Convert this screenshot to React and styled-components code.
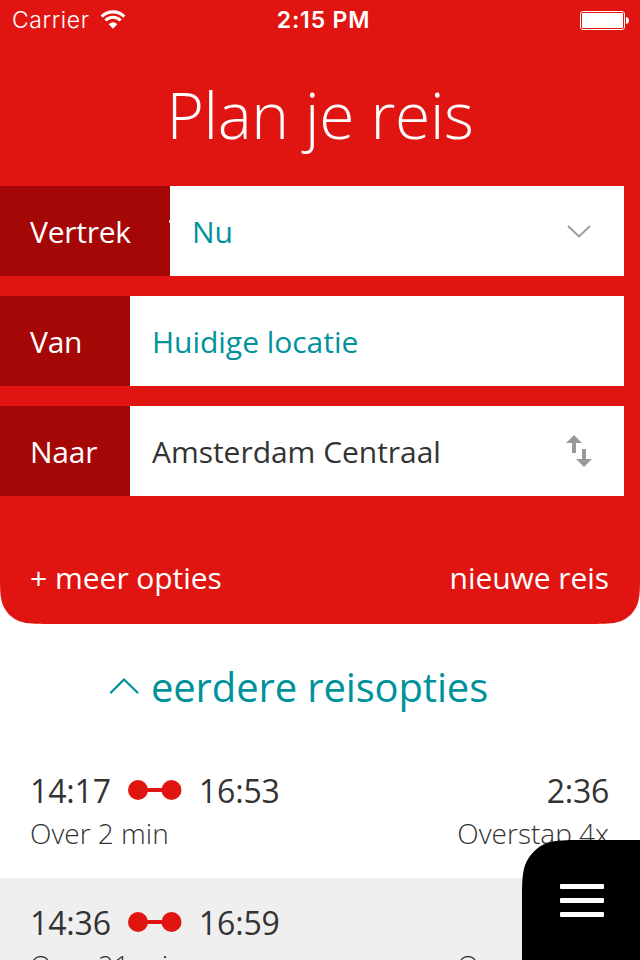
import styled, { createGlobalStyle } from "styled-components";

const GlobalStyle = createGlobalStyle`
  * {
    box-sizing: border-box;
  }

  body {
    margin: 0;
    background: #ffffff;
    color: #333333;
    font-family: "Open Sans", sans-serif;
  }
`;

const Screen = styled.div`
  position: relative;
  width: 640px;
  height: 960px;
  overflow: hidden;
  background: #ffffff;
`;

const Planner = styled.section`
  display: flex;
  flex-direction: column;
  height: 624px;
  background: #e01512;
  color: #ffffff;
  clip-path: path(
    "M0 0H640V575.1C640 589.2 640 596.2 637.6 603.8C634.6 612.1 628.1 618.6 619.8 621.6C612.2 624 605.2 624 591.1 624H48.9C34.8 624 27.8 624 20.2 621.6C11.9 618.6 5.4 612.1 2.4 603.8C0 596.2 0 589.2 0 575.1Z"
  );
`;

const StatusBar = styled.div`
  display: grid;
  grid-template-columns: 1fr auto 1fr;
  align-items: center;
  height: 40px;
  padding: 0 11px 0 12px;
  font-family: Inter, sans-serif;
  font-size: 23px;
  line-height: 40px;
`;

const Carrier = styled.div`
  display: flex;
  align-items: center;
  gap: 10px;
  font-weight: 350;
  letter-spacing: 0.6px;
`;

const Clock = styled.div`
  padding-left: 6px;
  font-weight: 600;
  letter-spacing: 0.8px;
`;

const Battery = styled.svg`
  justify-self: end;
`;

const Title = styled.h1`
  height: 146px;
  margin: 0;
  padding-top: 31px;
  font-size: 64px;
  font-weight: 300;
  letter-spacing: -0.3px;
  line-height: 87px;
  text-align: center;
`;

const Fields = styled.div`
  display: flex;
  flex-direction: column;
  gap: 20px;
  padding-right: 16px;
`;

const Field = styled.div`
  display: flex;
  height: 90px;
  font-size: 30px;
  letter-spacing: -0.03px;
  line-height: 92px;
`;

const Label = styled.div`
  position: relative;
  width: ${(props) => (props.$wide ? 170 : 130)}px;
  padding-left: 30px;
  background: #a50606;
  letter-spacing: -0.25px;
`;

const LabelEdge = styled.span`
  position: absolute;
  top: 34px;
  right: 0;
  width: 1px;
  height: 3px;
  background: #e8c0c0;
`;

const Value = styled.div`
  display: flex;
  flex: 1;
  justify-content: space-between;
  padding: 0 31px 0 22px;
  background: #ffffff;
  color: ${(props) => (props.$dark ? "#333333" : "#00929c")};

  svg {
    align-self: center;
  }
`;

const Actions = styled.div`
  display: flex;
  justify-content: space-between;
  margin-top: 61px;
  padding: 0 31px 0 30px;
  font-size: 30px;
  letter-spacing: -0.06px;
  line-height: 41px;
`;

const More = styled.div`
  display: flex;
  gap: 8px;
`;

const Earlier = styled.div`
  display: flex;
  align-items: center;
  gap: 12px;
  height: 122px;
  padding: 4px 0 0 109px;
  color: #00929c;
  font-size: 40px;
  letter-spacing: -0.15px;
  line-height: 54px;
`;

const EarlierArrow = styled.svg`
  margin-top: -3px;
`;

const Trip = styled.div`
  display: grid;
  grid-template-columns: 1fr auto;
  align-content: start;
  height: 132px;
  padding: 22px 31px 0 30px;
  background: ${(props) => (props.$shaded ? "#efefef" : "#ffffff")};
`;

const Times = styled.div`
  display: flex;
  align-items: center;
  gap: 17px;
  font-size: 32px;
  letter-spacing: -0.15px;
  line-height: 46px;
`;

const Duration = styled.div`
  font-size: 32px;
  letter-spacing: -0.25px;
  line-height: 46px;
  text-align: right;
`;

const Note = styled.div`
  font-size: 28px;
  font-weight: 300;
  line-height: 38px;
`;

const MenuButton = styled.div`
  position: absolute;
  right: 0;
  bottom: 0;
  display: flex;
  flex-direction: column;
  gap: 9px;
  width: 118px;
  height: 120px;
  padding: 44px 0 0 38px;
  background: #000000;
  clip-path: path(
    "M0 120V61.1C0 43.5 0 34.7 3 25.2C6.8 14.9 14.9 6.8 25.2 3C34.7 0 43.5 0 61.1 0H118V120Z"
  );
`;

const MenuBar = styled.span`
  width: 44px;
  height: 5px;
  border-radius: 1px;
  background: #ffffff;
`;

const Wifi = () => (
  <svg width="26" height="20" viewBox="0 0 26 20">
    <g fill="none" stroke="#ffffff">
      <path d="M1.7 6.6A16 16 0 0 1 24.3 6.6" strokeWidth="3.2" />
      <path d="M5.4 10.5A10.8 10.8 0 0 1 20.6 10.5" strokeWidth="3" />
    </g>
    <path d="M13 18.8L8.7 14.2Q13 10.5 17.3 14.2Z" fill="#ffffff" />
  </svg>
);

const Route = () => (
  <svg width="54" height="22" viewBox="0 0 54 22" fill="#e01512">
    <rect x="10" y="8" width="34" height="4" />
    <circle cx="10" cy="10" r="10" />
    <circle cx="43.5" cy="10" r="10" />
  </svg>
);

const trips = [
  {
    start: "14:17",
    end: "16:53",
    duration: "2:36",
    note: "Over 2 min",
    changes: "Overstap 4x",
  },
  {
    start: "14:36",
    end: "16:59",
    duration: "2:23",
    note: "Over 21 min",
    changes: "Overstap 4x",
  },
];

const App = () => {
  return (
    <>
      <GlobalStyle />
      <Screen>
        <Planner>
          <StatusBar>
            <Carrier>
              Carrier
              <Wifi />
            </Carrier>
            <Clock>2:15 PM</Clock>
            <Battery width="50" height="20" viewBox="0 0 50 20">
              <rect
                x="1.5"
                y="1.5"
                width="44"
                height="18"
                rx="2.5"
                fill="none"
                stroke="#ffffff"
              />
              <rect x="3" y="3" width="41" height="15" rx="1" fill="#ffffff" />
              <path d="M47 7Q50 7.5 50 10.5Q50 13.5 47 14Z" fill="#ffffff" />
            </Battery>
          </StatusBar>
          <Title>Plan je reis</Title>
          <Fields>
            <Field>
              <Label $wide>
                Vertrek
                <LabelEdge />
              </Label>
              <Value>
                Nu
                <svg width="28" height="16" viewBox="0 0 28 16">
                  <path
                    d="M3 3L14 13.5L25 3"
                    fill="none"
                    stroke="#999999"
                    strokeWidth="1.8"
                  />
                </svg>
              </Value>
            </Field>
            <Field>
              <Label>Van</Label>
              <Value>Huidige locatie</Value>
            </Field>
            <Field>
              <Label>Naar</Label>
              <Value $dark>
                Amsterdam Centraal
                <svg width="28" height="32" viewBox="0 0 28 32" fill="#999999">
                  <path d="M9 0L17 8H11V18H7V8H1Z" />
                  <path d="M19 32L11 24H17V14H21V24H27Z" />
                </svg>
              </Value>
            </Field>
          </Fields>
          <Actions>
            <More>
              <span>+</span>
              <span>meer opties</span>
            </More>
            <span>nieuwe reis</span>
          </Actions>
        </Planner>
        <Earlier>
          <EarlierArrow width="30" height="18" viewBox="0 0 30 18">
            <path
              d="M2 15.5L15 2.5L28.5 15.5"
              fill="none"
              stroke="#00929c"
              strokeWidth="2.3"
              strokeLinecap="round"
            />
          </EarlierArrow>
          eerdere reisopties
        </Earlier>
        {trips.map((trip, index) => (
          <Trip key={trip.start} $shaded={index % 2 === 1}>
            <Times>
              {trip.start}
              <Route />
              {trip.end}
            </Times>
            <Duration>{trip.duration}</Duration>
            <Note>{trip.note}</Note>
            <Note>{trip.changes}</Note>
          </Trip>
        ))}
        <MenuButton>
          <MenuBar />
          <MenuBar />
          <MenuBar />
        </MenuButton>
      </Screen>
    </>
  );
};

export default App;
